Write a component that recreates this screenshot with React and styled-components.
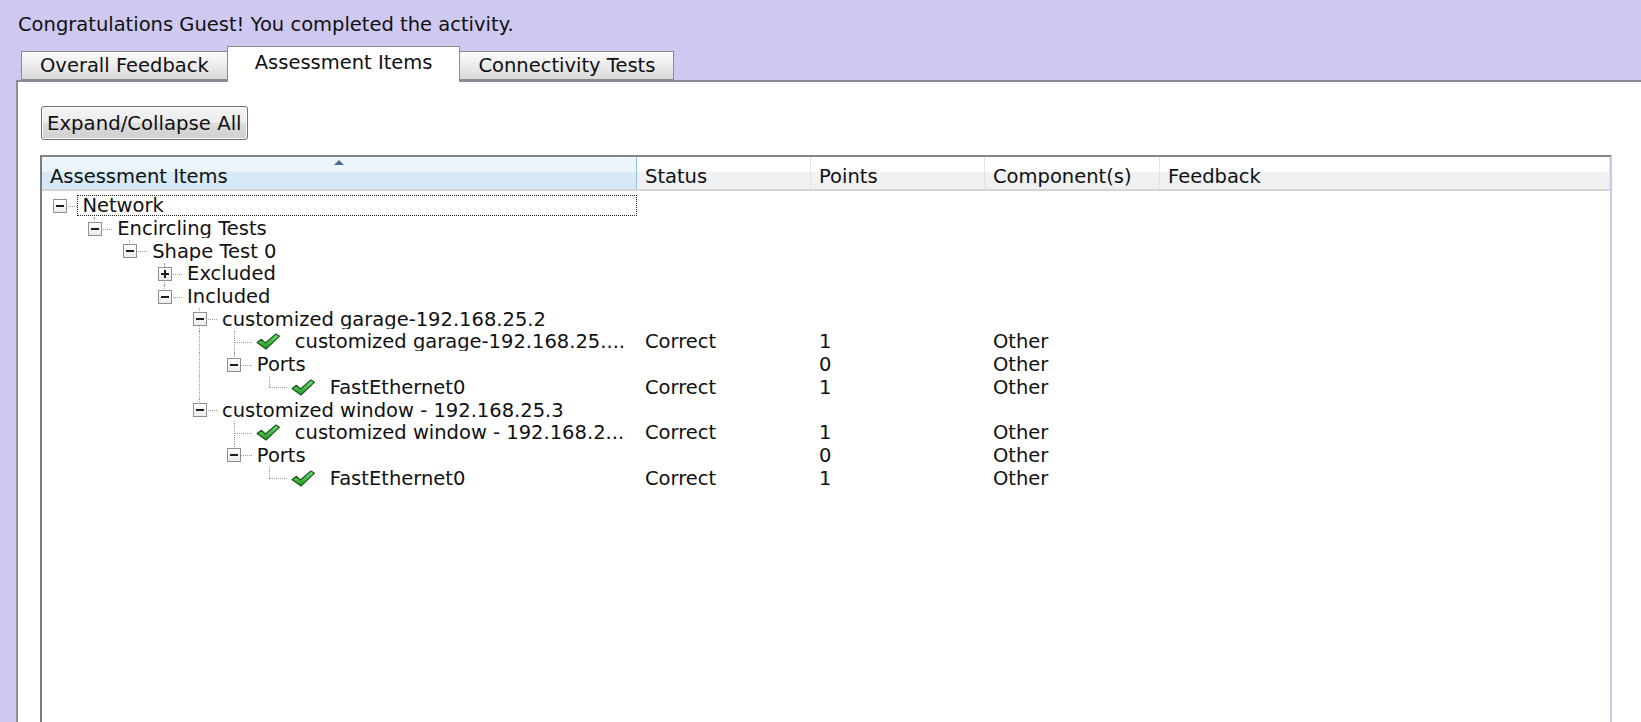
import React from "react";
import styled, { createGlobalStyle } from "styled-components";

const GlobalStyle = createGlobalStyle`
  html, body {
    margin: 0;
    padding: 0;
    height: 100%;
    overflow: hidden;
    background: #cfc9f1;
  }
  body {
    font-family: "DejaVu Sans", Verdana, sans-serif;
    color: #111;
  }
`;

const LEVEL = 34.9;

const rows = [
  { level: 0, label: "Network", toggle: "minus", focus: true, next: false },
  { level: 1, label: "Encircling Tests", toggle: "minus", next: false },
  { level: 2, label: "Shape Test 0", toggle: "minus", next: false },
  { level: 3, label: "Excluded", toggle: "plus", next: true },
  { level: 3, label: "Included", toggle: "minus", next: false },
  { level: 4, label: "customized garage-192.168.25.2", toggle: "minus", next: true },
  { level: 5, label: "customized garage-192.168.25....", next: true, status: "Correct", points: "1", comp: "Other" },
  { level: 5, label: "Ports", toggle: "minus", next: false, points: "0", comp: "Other" },
  { level: 6, label: "FastEthernet0", next: false, status: "Correct", points: "1", comp: "Other" },
  { level: 4, label: "customized window - 192.168.25.3", toggle: "minus", next: false },
  { level: 5, label: "customized window - 192.168.2...", next: true, status: "Correct", points: "1", comp: "Other" },
  { level: 5, label: "Ports", toggle: "minus", next: false, points: "0", comp: "Other" },
  { level: 6, label: "FastEthernet0", next: false, status: "Correct", points: "1", comp: "Other" },
];

const columns = ["Assessment Items", "Status", "Points", "Component(s)", "Feedback"];

// ancestors that still have siblings below keep their dotted line running
function withGuides(list) {
  const open = [];
  return list.map((r) => {
    const guides = open.slice(0, r.level);
    open[r.level] = r.next;
    return { ...r, guides };
  });
}

function CheckIcon() {
  return (
    <svg width="24" height="17" viewBox="0 0 24 17">
      <defs>
        <linearGradient id="chk" x1="0" y1="0" x2="0" y2="1">
          <stop offset="0" stopColor="#74de74" />
          <stop offset="1" stopColor="#1f9a1f" />
        </linearGradient>
      </defs>
      <path
        d="M1 9.5 L5.5 6.3 L9.4 10 L20 1 L23.5 3.2 L10 16 Z"
        fill="url(#chk)"
        stroke="#1c561c"
        strokeWidth="1.1"
        strokeLinejoin="round"
      />
    </svg>
  );
}

function App() {
  const data = withGuides(rows);
  return (
    <>
      <GlobalStyle />
      <Page>
        <Title>Congratulations Guest! You completed the activity.</Title>
        <TabBar>
          <Tab>Overall Feedback</Tab>
          <Tab active>Assessment Items</Tab>
          <Tab>Connectivity Tests</Tab>
        </TabBar>
        <Panel>
          <Button>Expand/Collapse All</Button>
          <Table>
            <HeaderRow>
              {columns.map((c, i) => (
                <HeaderCell key={c} sorted={i === 0}>
                  {i === 0 && <SortArrow />}
                  {c}
                </HeaderCell>
              ))}
            </HeaderRow>
            <Body>
              {data.map((r, idx) => (
                <Row key={idx}>
                  <TreeCell>
                    {r.guides.map((g, i) => (
                      <Guide key={i} line={g} />
                    ))}
                    <NodeCell top={r.level > 0} bottom={r.next}>
                      {r.toggle && <Toggle>{r.toggle === "plus" && <PlusBar />}</Toggle>}
                    </NodeCell>
                    {!r.toggle && (
                      <IconSlot>
                        <CheckIcon />
                      </IconSlot>
                    )}
                    <Label focus={r.focus} leaf={!r.toggle}>
                      {r.label}
                    </Label>
                  </TreeCell>
                  <Cell>{r.status || ""}</Cell>
                  <Cell>{r.points || ""}</Cell>
                  <Cell>{r.comp || ""}</Cell>
                  <Cell />
                </Row>
              ))}
            </Body>
          </Table>
        </Panel>
      </Page>
    </>
  );
}

export default App;

const Page = styled.div`
  height: 100vh;
  display: flex;
  flex-direction: column;
  padding-left: 16px;
  box-sizing: border-box;
`;

const Title = styled.div`
  font-size: 19.5px;
  line-height: 24px;
  padding: 13px 0 0 2px;
  height: 37px;
  box-sizing: border-box;
  white-space: nowrap;
`;

const TabBar = styled.div`
  display: flex;
  align-items: flex-end;
  padding-left: 5px;
  height: 45px;
  position: relative;
  z-index: 2;
  margin-bottom: -2px;
`;

const Tab = styled.div`
  font-size: 19.5px;
  white-space: nowrap;
  box-sizing: border-box;
  border: 1px solid #8c8c8c;
  border-bottom: ${(p) => (p.active ? "none" : "1px solid #8c8c8c")};
  height: ${(p) => (p.active ? "36px" : "29px")};
  padding: ${(p) => (p.active ? "0 27px 4px" : "0 18px")};
  margin: ${(p) => (p.active ? "0 -1px" : "0 0 2px")};
  display: flex;
  align-items: center;
  background: ${(p) =>
    p.active ? "#ffffff" : "linear-gradient(#fbfbfb 0%, #ececec 50%, #d9d9d9 100%)"};
  position: relative;
  z-index: ${(p) => (p.active ? 1 : 0)};
`;

const Panel = styled.div`
  flex: 1;
  background: #ffffff;
  border-top: 2px solid #8b8a96;
  border-left: 2px solid #8e8e96;
  padding: 24px 29px 0 22px;
  display: flex;
  flex-direction: column;
  min-height: 0;
`;

const Button = styled.button`
  align-self: flex-start;
  margin-left: 1px;
  height: 34px;
  padding: 0 5px;
  font-family: "DejaVu Sans", Verdana, sans-serif;
  font-size: 19.7px;
  color: #111;
  border: 1px solid #707070;
  border-radius: 3px;
  background: linear-gradient(#f4f4f4 0%, #ebebeb 50%, #dddddd 51%, #cfcfcf 100%);
  box-shadow: inset 0 0 0 1px #fcfcfc;
  white-space: nowrap;
`;

const Table = styled.div`
  margin-top: 15px;
  flex: 1;
  border-top: 2px solid #858585;
  border-left: 2px solid #7c7c7c;
  border-right: 2px solid #cbc6ee;
  display: flex;
  flex-direction: column;
`;

const grid = `
  display: grid;
  grid-template-columns: 595px 174px 174px 175px 1fr;
`;

const HeaderRow = styled.div`
  ${grid}
  height: 34px;
  box-sizing: border-box;
  border-bottom: 2px solid #d5d5d5;
  background: linear-gradient(#ffffff 0%, #ffffff 45%, #f1f2f4 46%, #eff0f2 100%);
`;

const HeaderCell = styled.div`
  position: relative;
  display: flex;
  align-items: center;
  padding: 7px 0 0 8px;
  font-size: 19.5px;
  white-space: nowrap;
  border-right: 1px solid ${(p) => (p.sorted ? "#8fc4e8" : "#e2e3e5")};
  background: ${(p) =>
    p.sorted ? "linear-gradient(#f0f7fc 0%, #eaf4fb 45%, #d8eaf6 46%, #d5e8f5 100%)" : "transparent"};
`;

const SortArrow = styled.span`
  position: absolute;
  top: 3px;
  left: 292px;
  width: 0;
  height: 0;
  border-left: 5px solid transparent;
  border-right: 5px solid transparent;
  border-bottom: 5px solid #4d6a92;
`;

const Body = styled.div`
  padding-top: 3.5px;
  display: flex;
  flex-direction: column;
`;

const Row = styled.div`
  ${grid}
  height: 22.7px;
  font-size: 19.5px;
  line-height: 19px;
  white-space: nowrap;
`;

const TreeCell = styled.div`
  display: flex;
  align-items: center;
  padding-left: 0.5px;
  min-width: 0;
  overflow: hidden;
`;

const Guide = styled.span`
  flex: 0 0 ${LEVEL}px;
  align-self: stretch;
  position: relative;
  &::before {
    content: "";
    display: ${(p) => (p.line ? "block" : "none")};
    position: absolute;
    left: 17px;
    top: 0;
    bottom: 0;
    border-left: 1px dotted #9c9c9c;
  }
`;

const NodeCell = styled.span`
  flex: 0 0 ${LEVEL}px;
  align-self: stretch;
  position: relative;
  display: flex;
  align-items: center;
  &::before {
    content: "";
    display: ${(p) => (p.top || p.bottom ? "block" : "none")};
    position: absolute;
    left: 17px;
    top: ${(p) => (p.top ? "0" : "50%")};
    bottom: ${(p) => (p.bottom ? "0" : "50%")};
    border-left: 1px dotted #9c9c9c;
  }
  &::after {
    content: "";
    position: absolute;
    left: 17px;
    right: 0;
    top: 50%;
    border-top: 1px dotted #9c9c9c;
  }
`;

const Toggle = styled.span`
  position: relative;
  z-index: 1;
  margin-left: 10.5px;
  width: 14px;
  height: 14px;
  box-sizing: border-box;
  border: 1px solid #8f8f8f;
  background: linear-gradient(#ffffff, #ececec);
  display: flex;
  align-items: center;
  justify-content: center;
  &::before {
    content: "";
    width: 8px;
    height: 2px;
    background: #1c1c1c;
  }
`;

const PlusBar = styled.span`
  position: absolute;
  left: 5px;
  top: 2px;
  width: 2px;
  height: 8px;
  background: #1c1c1c;
`;

const IconSlot = styled.span`
  flex: 0 0 24px;
  margin-left: 4px;
  display: flex;
  align-items: center;
`;

const Label = styled.span`
  flex: ${(p) => (p.focus ? "1" : "0 1 auto")};
  min-width: 0;
  overflow: hidden;
  height: 21px;
  line-height: 20px;
  box-sizing: border-box;
  padding: 0 4px;
  margin-left: ${(p) => (p.leaf ? "10px" : "0")};
  border: 1px dotted ${(p) => (p.focus ? "#222" : "transparent")};
`;

const Cell = styled.div`
  padding-left: 8px;
  display: flex;
  align-items: center;
  overflow: hidden;
`;
